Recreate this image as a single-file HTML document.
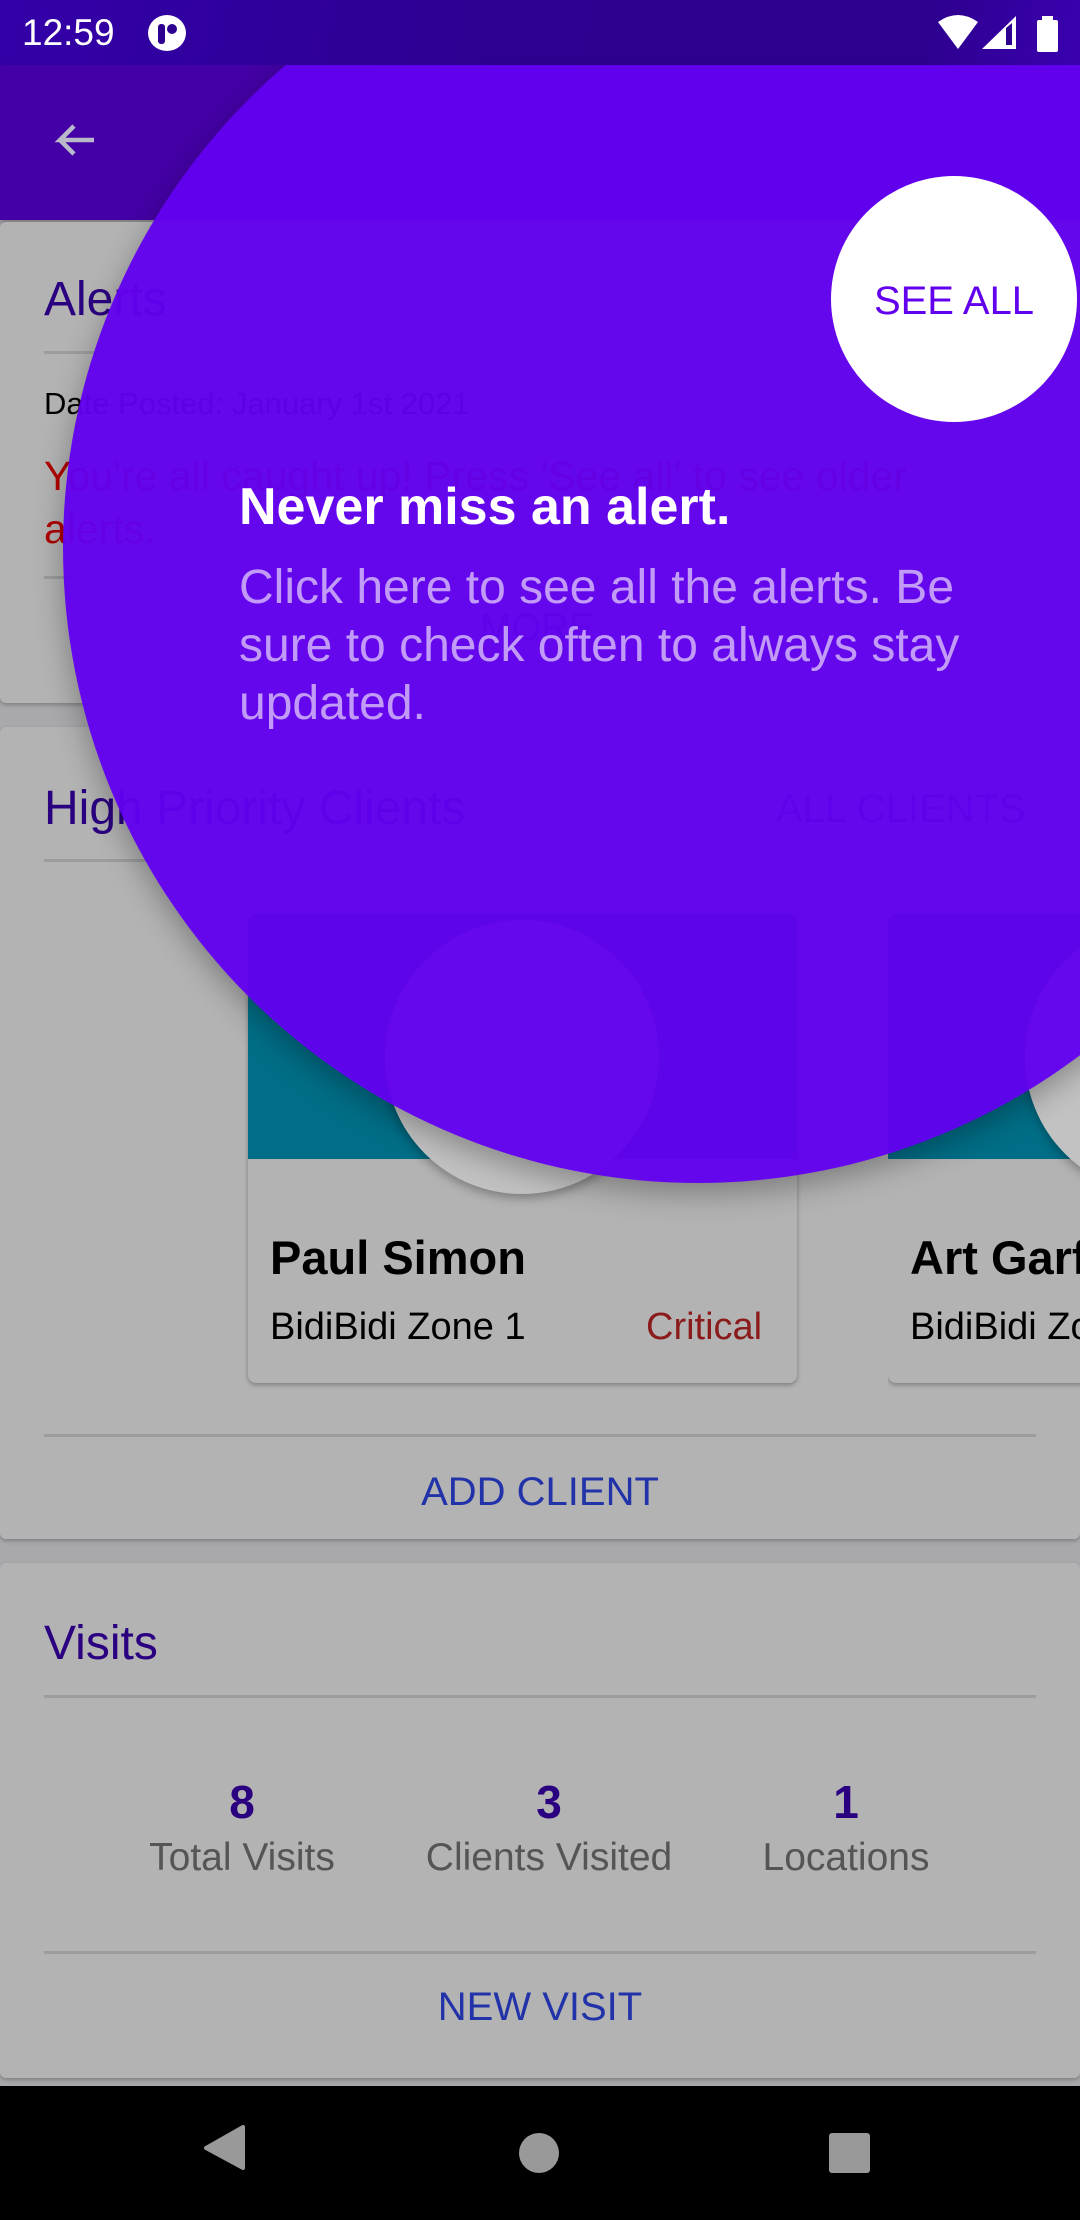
<!DOCTYPE html>
<html><head><meta charset="utf-8"><style>
*{margin:0;padding:0;box-sizing:border-box}
body{width:1080px;height:2220px;overflow:hidden;background:#a9a9ad;font-family:"Liberation Sans",sans-serif;position:relative}
.abs{position:absolute}
.card{position:absolute;left:0;width:1080px;background:#b3b3b3;border-radius:6px;box-shadow:0 2px 4px rgba(0,0,0,0.25)}
.t{position:absolute;white-space:nowrap}
.div{position:absolute;left:44px;width:992px;height:3px;background:#9c9c9c}
</style></head><body>
<!-- status bar -->
<div class="abs" style="left:0;top:0;width:1080px;height:65px;background:linear-gradient(100deg,#3300a8 0%,#2d008f 50%,#2d008d 85%,#3a00b0 100%)"></div>
<div class="t" style="left:22px;top:12px;font-size:37px;color:#fff">12:59</div>
<svg class="abs" style="left:146px;top:14px" width="42" height="38" viewBox="0 0 42 38"><ellipse cx="21" cy="19" rx="19" ry="18" fill="#fff"/><rect x="12" y="10" width="7" height="20" rx="3" fill="#2d008f"/><circle cx="26" cy="15" r="5" fill="#2d008f"/></svg>
<svg class="abs" style="left:936px;top:14px" width="124" height="38" viewBox="0 0 124 38"><path d="M2 8 Q22 -6 42 8 L22 35 Z" fill="#fff"/><path d="M46 35 L80 2 L80 35 Z" fill="#fff"/><path d="M70 14 L76 9 L76 31 L70 31 Z" fill="#2d008f"/><rect x="101" y="6" width="21" height="32" rx="2" fill="#fff"/><rect x="106" y="2" width="11" height="5" fill="#fff"/></svg>
<!-- toolbar -->
<div class="abs" style="left:0;top:65px;width:1080px;height:155px;background:#4400a6;box-shadow:0 3px 5px rgba(0,0,0,0.25)"></div>
<svg class="abs" style="left:50px;top:118px" width="48" height="48" viewBox="0 0 48 48"><path d="M44 22H10L24 8M10 22L24 36" stroke="#b9b9c9" stroke-width="4.5" fill="none"/></svg>
<div class="t" style="left:200px;top:116px;font-size:57px;color:#4400a6">Dashboard</div>
<!-- card 1 -->
<div class="card" style="top:222px;height:481px"></div>
<div class="t" style="left:44px;top:272px;font-size:48px;color:#2a0080">Alerts</div>
<div class="div" style="top:351px"></div>
<div class="t" style="left:44px;top:386px;font-size:31px;color:#000">Date Posted: January 1st 2021</div>
<div class="t" style="left:44px;top:450px;font-size:41px;color:#b00000;line-height:53px">You're all caught up! Press 'See all' to see older<br>alerts.</div>
<div class="div" style="top:576px"></div>
<div class="t" style="left:480px;top:607px;font-size:38px;color:#2233aa">MORE</div>
<!-- card 2 -->
<div class="card" style="top:727px;height:812px"></div>
<div class="t" style="left:44px;top:781px;font-size:48px;color:#2a0080">High Priority Clients</div>
<div class="t" style="left:776px;top:787px;font-size:40px;color:#2233aa">ALL CLIENTS</div>
<div class="div" style="top:859px"></div>
<div class="abs" style="left:248px;top:914px;width:549px;height:469px;background:#b3b3b3;border-radius:8px;box-shadow:0 2px 5px rgba(0,0,0,0.3);overflow:hidden">
 <div class="abs" style="left:0;top:0;width:549px;height:245px;background:#006e87"></div>
 <div class="abs" style="left:137px;top:6px;width:274px;height:274px;border-radius:50%;background:#c2c2c2;box-shadow:0 4px 10px rgba(0,0,0,0.3)"></div>
</div>
<div class="t" style="left:270px;top:1230px;font-size:47px;font-weight:bold;color:#000">Paul Simon</div>
<div class="t" style="left:270px;top:1306px;font-size:38px;color:#000">BidiBidi Zone 1</div>
<div class="t" style="left:646px;top:1306px;font-size:38px;color:#8b1a1a">Critical</div>
<div class="abs" style="left:888px;top:914px;width:192px;height:475px;overflow:hidden">
 <div class="abs" style="left:0;top:0;width:260px;height:469px;background:#b3b3b3;border-radius:8px;box-shadow:0 2px 5px rgba(0,0,0,0.3);overflow:hidden">
  <div class="abs" style="left:0;top:0;width:260px;height:245px;background:#006e87"></div>
  <div class="abs" style="left:137px;top:6px;width:274px;height:274px;border-radius:50%;background:#c2c2c2;box-shadow:0 4px 10px rgba(0,0,0,0.3)"></div>
 </div>
 <div class="t" style="left:22px;top:316px;font-size:47px;font-weight:bold;color:#000">Art Garfunkel</div>
 <div class="t" style="left:22px;top:392px;font-size:38px;color:#000">BidiBidi Zone 1</div>
</div>
<div class="div" style="top:1434px"></div>
<div class="t" style="left:0;width:1080px;text-align:center;top:1470px;font-size:40px;color:#2233aa">ADD CLIENT</div>
<!-- card 3 -->
<div class="card" style="top:1563px;height:515px"></div>
<div class="t" style="left:44px;top:1616px;font-size:48px;color:#2a0080">Visits</div>
<div class="div" style="top:1695px"></div>
<div class="t" style="left:142px;width:200px;text-align:center;top:1775px;font-size:46px;font-weight:bold;color:#2a0080">8</div>
<div class="t" style="left:449px;width:200px;text-align:center;top:1775px;font-size:46px;font-weight:bold;color:#2a0080">3</div>
<div class="t" style="left:746px;width:200px;text-align:center;top:1775px;font-size:46px;font-weight:bold;color:#2a0080">1</div>
<div class="t" style="left:92px;width:300px;text-align:center;top:1836px;font-size:39px;color:#555">Total Visits</div>
<div class="t" style="left:399px;width:300px;text-align:center;top:1836px;font-size:39px;color:#555">Clients Visited</div>
<div class="t" style="left:696px;width:300px;text-align:center;top:1836px;font-size:39px;color:#555">Locations</div>
<div class="div" style="top:1951px"></div>
<div class="t" style="left:0;width:1080px;text-align:center;top:1985px;font-size:40px;color:#2233aa">NEW VISIT</div>
<!-- overlay circle -->
<div class="abs" style="left:0;top:65px;width:1080px;height:1200px;overflow:hidden">
 <div class="abs" style="left:63px;top:-152px;width:1270px;height:1270px;border-radius:50%;background:rgba(98,0,238,0.96);box-shadow:0 10px 30px rgba(0,0,0,0.3)"></div>
 <div class="abs" style="left:831px;top:111px;width:246px;height:246px;border-radius:50%;background:#fff"></div>
 <div class="t" style="left:831px;width:246px;text-align:center;top:214px;font-size:40px;color:#6200ee">SEE ALL</div>
 <div class="t" style="left:239px;top:412px;font-size:52px;font-weight:bold;color:#fff">Never miss an alert.</div>
 <div class="t" style="left:239px;top:494px;font-size:48px;line-height:58px;color:rgba(255,255,255,0.6)">Click here to see all the alerts. Be<br>sure to check often to always stay<br>updated.</div>
</div>
<!-- nav bar -->
<div class="abs" style="left:0;top:2086px;width:1080px;height:134px;background:#000"></div>
<svg class="abs" style="left:0;top:2086px" width="1080" height="134" viewBox="0 0 1080 134"><path d="M243 41 L243 82 L206 62 Z" fill="#999" stroke="#999" stroke-width="4" stroke-linejoin="round"/><circle cx="539" cy="67" r="20" fill="#999"/><rect x="829" y="47" width="41" height="40" rx="3" fill="#999"/></svg>
</body></html>
